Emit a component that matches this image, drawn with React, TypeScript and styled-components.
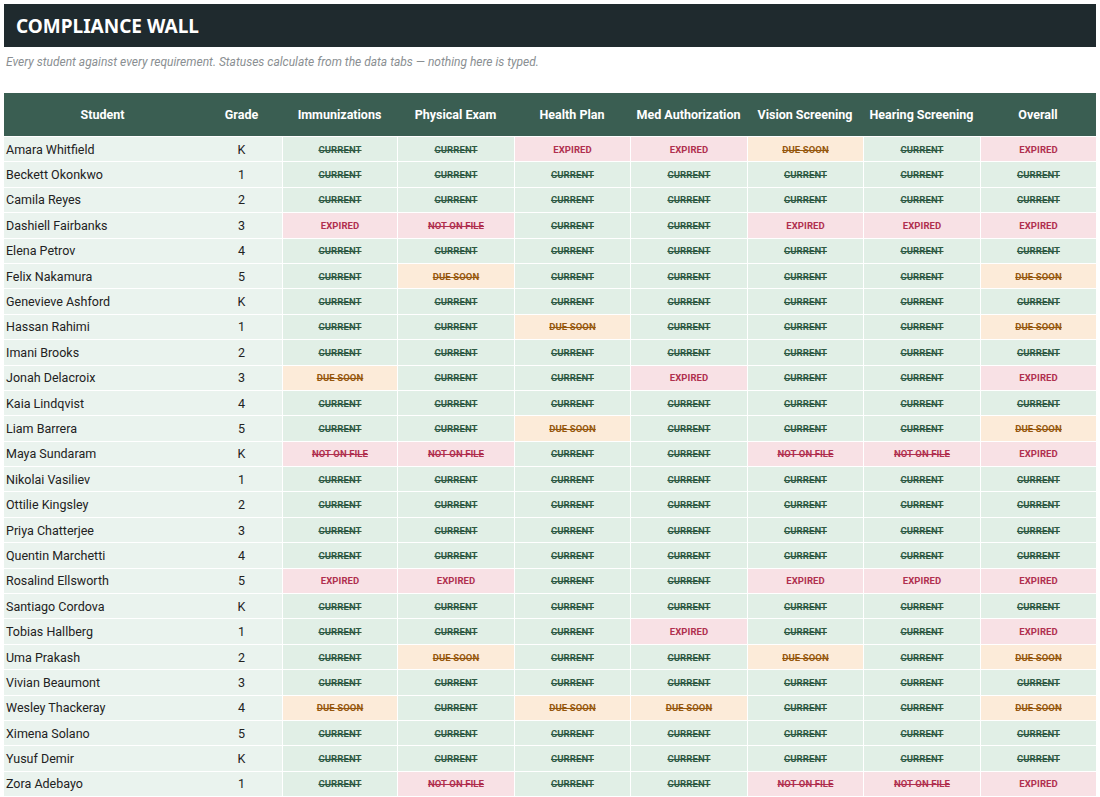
import * as React from "react";
import styled, { createGlobalStyle } from "styled-components";

const GlobalStyle = createGlobalStyle`
    body {
        margin: 0;
        background: #ffffff;
        font-family: Roboto, "Noto Sans", sans-serif;
    }
`;

const Page = styled.div`
    padding: 4px 4px 0 4px;
`;

const TitleBar = styled.div`
    background: #1f2a2e;
    height: 43px;
    display: flex;
    align-items: center;
    padding-left: 12px;
    color: #ffffff;
    font-family: "Noto Sans", sans-serif;
    font-weight: 700;
    font-size: 19px;
`;

const Subtitle = styled.div`
    color: #8a8f92;
    font-style: italic;
    font-size: 12px;
    padding: 8px 2px 0 2px;
    height: 38px;
`;

const Table = styled.table`
    width: 1092px;
    border-collapse: separate;
    border-spacing: 0 1px;
    table-layout: fixed;
    margin-top: -1px;
`;

const HeadCell = styled.th<{ w: number }>`
    width: ${p => p.w}px;
    background: #3a5e52;
    color: #ffffff;
    font-size: 12.5px;
    font-weight: 700;
    height: 43px;
    padding: 0;
    text-align: center;
`;

const NameCell = styled.td`
    background: #eaf3ee;
    color: #222;
    font-size: 12.5px;
    height: 24.4px;
    padding: 0 0 0 2px;
    white-space: nowrap;
`;

const GradeCell = styled.td`
    background: #eaf3ee;
    color: #222;
    font-size: 12.5px;
    text-align: center;
    padding: 0;
`;

const tones: Record<string, { bg: string; fg: string }> = {
    C: { bg: "#e1efe6", fg: "#2f5a44" },
    E: { bg: "#f8e1e5", fg: "#b0304f" },
    N: { bg: "#f8e1e5", fg: "#b0304f" },
    D: { bg: "#fcebd9", fg: "#96580e" },
};

const labels: Record<string, string> = {
    C: "CURRENT",
    E: "EXPIRED",
    N: "NOT ON FILE",
    D: "DUE SOON",
};

const StatusCell = styled.td<{ s: string }>`
    background: ${p => tones[p.s].bg};
    color: ${p => tones[p.s].fg};
    border-left: 1px solid #ffffff;
    text-align: center;
    font-size: 9.5px;
    font-weight: 700;
    letter-spacing: 0.1px;
    text-decoration: ${p => (p.s === "E" ? "none" : "line-through")};
    text-decoration-thickness: 1px;
    padding: 0;
`;

const columns: [string, number][] = [
    ["Student", 197],
    ["Grade", 81],
    ["Immunizations", 115],
    ["Physical Exam", 117],
    ["Health Plan", 116],
    ["Med Authorization", 117],
    ["Vision Screening", 116],
    ["Hearing Screening", 117],
    ["Overall", 116],
];

const rows: [string, string, string][] = [
    ["Amara Whitfield", "K", "CCEEDCE"],
    ["Beckett Okonkwo", "1", "CCCCCCC"],
    ["Camila Reyes", "2", "CCCCCCC"],
    ["Dashiell Fairbanks", "3", "ENCCEEE"],
    ["Elena Petrov", "4", "CCCCCCC"],
    ["Felix Nakamura", "5", "CDCCCCD"],
    ["Genevieve Ashford", "K", "CCCCCCC"],
    ["Hassan Rahimi", "1", "CCDCCCD"],
    ["Imani Brooks", "2", "CCCCCCC"],
    ["Jonah Delacroix", "3", "DCCECCE"],
    ["Kaia Lindqvist", "4", "CCCCCCC"],
    ["Liam Barrera", "5", "CCDCCCD"],
    ["Maya Sundaram", "K", "NNCCNNE"],
    ["Nikolai Vasiliev", "1", "CCCCCCC"],
    ["Ottilie Kingsley", "2", "CCCCCCC"],
    ["Priya Chatterjee", "3", "CCCCCCC"],
    ["Quentin Marchetti", "4", "CCCCCCC"],
    ["Rosalind Ellsworth", "5", "EECCEEE"],
    ["Santiago Cordova", "K", "CCCCCCC"],
    ["Tobias Hallberg", "1", "CCCECCE"],
    ["Uma Prakash", "2", "CDCCDCD"],
    ["Vivian Beaumont", "3", "CCCCCCC"],
    ["Wesley Thackeray", "4", "DCDDCCD"],
    ["Ximena Solano", "5", "CCCCCCC"],
    ["Yusuf Demir", "K", "CCCCCCC"],
    ["Zora Adebayo", "1", "CNCCNNE"],
    ["Adrian Castellano", "2", "CCCCCCC"],
];

export default function App() {
    return (
        <Page>
            <GlobalStyle />
            <TitleBar>COMPLIANCE WALL</TitleBar>
            <Subtitle>
                Every student against every requirement. Statuses calculate from the data tabs — nothing here is typed.
            </Subtitle>
            <Table>
                <thead>
                    <tr>
                        {columns.map(([name, w]) => (
                            <HeadCell key={name} w={w}>{name}</HeadCell>
                        ))}
                    </tr>
                </thead>
                <tbody>
                    {rows.map(([name, grade, statuses]) => (
                        <tr key={name}>
                            <NameCell>{name}</NameCell>
                            <GradeCell>{grade}</GradeCell>
                            {statuses.split("").map((s, i) => (
                                <StatusCell key={i} s={s}>{labels[s]}</StatusCell>
                            ))}
                        </tr>
                    ))}
                </tbody>
            </Table>
        </Page>
    );
}
